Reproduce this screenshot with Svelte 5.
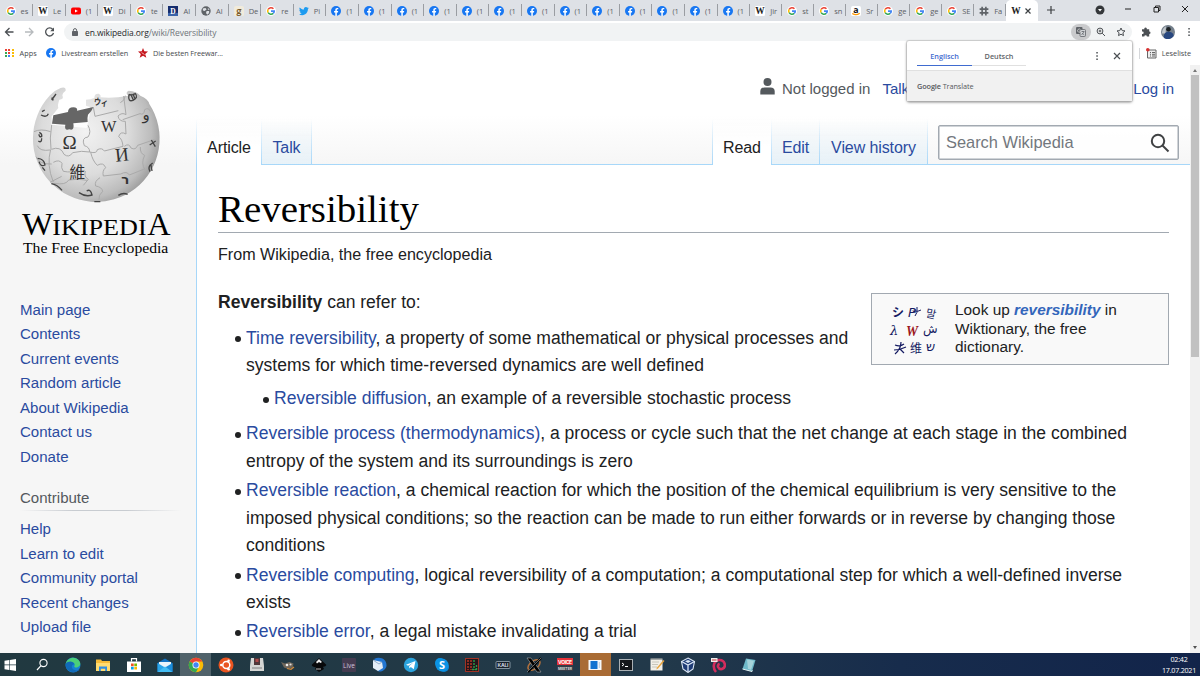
<script>
  const tabs = [
    ['g', 'es'], ['w', 'Le'], ['yt', '(1'], ['w', 'Di'], ['g', 'te'], ['d', 'Al'], ['globe', 'Al'],
    ['good', 'De'], ['g', 're'], ['tw', 'Pi'],
    ...Array.from({ length: 13 }, () => ['fb', '(1']),
    ['w', 'Jir'], ['g', 'st'], ['g', 'sn'], ['az', 'Sr'], ['g', 'ge'], ['g', 'ge'], ['g', 'SE'], ['hash', 'Fa']
  ];
  const nav = ['Main page', 'Contents', 'Current events', 'Random article', 'About Wikipedia', 'Contact us', 'Donate'];
  const contribute = ['Help', 'Learn to edit', 'Community portal', 'Recent changes', 'Upload file'];
  const apps = ['win', 'search', 'edge', 'files', 'store', 'mail', 'chrome', 'ubuntu', 'disk', 'gimp', 'ink', 'live',
    'bird', 'telegram', 'skype', 'grid', 'kali', 'x', 'voice', 'window', 'term', 'note', 'box', 'debian', 'notepad'];
  const dots = ['#ea4335', '#ea4335', '#fbbc05', '#34a853', '#ea4335', '#fbbc05', '#34a853', '#4285f4', '#fbbc05'];
</script>

{#snippet fav(kind)}
  <svg class="fav" viewBox="0 0 16 16">
    {#if kind === 'g'}
      <circle cx="8" cy="8" r="8" fill="#fff" />
      <g fill="none" stroke-width="2.5">
        <path d="M11.9 4.4A5.3 5.3 0 0 0 3.4 5.4" stroke="#ea4335" />
        <path d="M3.4 5.4A5.3 5.3 0 0 0 3.4 10.6" stroke="#fbbc05" />
        <path d="M3.4 10.6A5.3 5.3 0 0 0 11.6 11.8" stroke="#34a853" />
        <path d="M11.6 11.8A5 5 0 0 0 13.2 8.2H8" stroke="#4285f4" />
      </g>
    {:else if kind === 'w'}
      <rect width="16" height="16" rx="2" fill="#fff" />
      <text x="8" y="13" text-anchor="middle" font-family="Liberation Serif, serif" font-size="15" font-weight="bold" fill="#222" textLength="15" lengthAdjust="spacingAndGlyphs">W</text>
    {:else if kind === 'yt'}
      <rect x="0" y="2.5" width="16" height="11" rx="3" fill="#f00" /><path d="M6.4 5.5v5L11 8z" fill="#fff" />
    {:else if kind === 'd'}
      <rect width="16" height="16" fill="#142c6e" /><rect y="11" width="16" height="5" fill="#3b63a8" />
      <text x="8" y="12" text-anchor="middle" font-family="Liberation Serif, serif" font-size="12" font-weight="bold" fill="#fff">D</text>
    {:else if kind === 'globe'}
      <circle cx="8" cy="8" r="7.5" fill="#5f6368" /><path d="M3 4l4-1 2 2-3 3-3-1zM9 8l4 0 0 3-3 3-2-3zM11 3l3 3-3 0z" fill="#dee1e6" />
    {:else if kind === 'good'}
      <rect width="16" height="16" rx="3" fill="#f1ebdc" />
      <text x="8" y="12" text-anchor="middle" font-family="Lato, sans-serif" font-size="16" font-weight="bold" fill="#7b5c2c">g</text>
    {:else if kind === 'tw'}
      <path d="M0 13c2 .2 3.600-.4 4.600-1.300-1.500-.1-2.600-1-3-2.200h1.400C1.400 9 .6 7.700.6 6.200l1.400.4C.6 5.400.3 3.700 1.100 2.200 3 4.300 5.200 5.400 7.900 5.600 7.400 3.300 9 1.600 11 1.600c1 0 1.800.4 2.400 1l2-.8-1.400 1.900 1.900-.5-1.600 1.700C14.300 10 11 14.600 5.200 14.600 3.300 14.600 1.500 14 0 13z" fill="#1d9bf0" />
    {:else if kind === 'fb'}
      <circle cx="8" cy="8" r="8" fill="#1877f2" /><path d="M6.900 16v-5.700H4.900V8h2V6.200c0-2 1.200-3.100 3-3.100l1.700.1v2h-1c-1 0-1.300.6-1.300 1.200V8h2.200l-.4 2.300H9.300V16z" fill="#fff" />
    {:else if kind === 'az'}
      <rect width="16" height="16" rx="3" fill="#fff" />
      <text x="8" y="10.500" text-anchor="middle" font-family="Open Sans, sans-serif" font-size="14" font-weight="bold" fill="#111">a</text>
      <path d="M2 12q6 4 12-.4" stroke="#f90" stroke-width="1.800" fill="none" />
    {:else if kind === 'hash'}
      <path d="M5 1v14M11 1v14M1 5h14M1 11h14" stroke="#5f6368" stroke-width="2.600" />
    {/if}
  </svg>
{/snippet}

{#snippet app(kind)}
  <svg class="app" viewBox="0 0 16 16">
    {#if kind === 'win'}
      <path d="M2.500 3.700l4.800-.7v4.600H2.500zM7.900 2.900L14 2v5.600H7.900zM2.500 8.300h4.800V13l-4.800-.7zM7.900 8.300H14V14l-6.100-.9z" fill="#fff" />
    {:else if kind === 'search'}
      <circle cx="9.500" cy="6" r="3.600" fill="none" stroke="#fff" stroke-width="1.100" /><path d="M7 8.700L3 13" stroke="#fff" stroke-width="1.200" />
    {:else if kind === 'edge'}
      <circle cx="8" cy="8" r="7.500" fill="#1682d2" /><path d="M.6 7C2 1 9-1.500 13.500 3c2.500 2.600 2.600 6-1 7.300-2.200.6-4-.4-3-1.800C11 5.500 5 3.200.6 7z" fill="#4bcf7a" /><path d="M.6 7C3 3.500 8.500 4 9.200 7.200 6 7.500 5.500 12 10.500 13.300c2 .5 3-.6 4.200-1C12 16.500 2.500 16.500.6 9z" fill="#116ab8" />
    {:else if kind === 'files'}
      <path d="M1 2.500h5l1 1.500h8v10H1z" fill="#f5ba38" /><path d="M1 6h14v8H1z" fill="#ffdb70" /><path d="M4 9.500h8V14h-1.800v-2.200H5.800V14H4z" fill="#2f8de0" />
    {:else if kind === 'store'}
      <path d="M1 4.500h14V15H1z" fill="#fff" /><path d="M5.500 4.500V1.600h5v2.900" fill="none" stroke="#fff" stroke-width="1.200" /><path d="M5 6.500h2.700v2.700H5z" fill="#f25022" /><path d="M8.300 6.500H11v2.700H8.300z" fill="#7fba00" /><path d="M5 9.800h2.700v2.700H5z" fill="#00a4ef" /><path d="M8.300 9.800H11v2.700H8.300z" fill="#ffb900" />
    {:else if kind === 'mail'}
      <path d="M.500 6L8 1.500 15.500 6v9H.500z" fill="#1273c4" /><path d="M2 5h12v6H2z" fill="#e9f4fb" /><path d="M.500 6L8 10.500.500 15z" fill="#2aa4e8" /><path d="M15.500 6L8 10.500 15.500 15z" fill="#1b8ddb" /><path d="M.500 15L8 9.500l7.500 5.500z" fill="#42bdf4" />
    {:else if kind === 'chrome'}
      <circle cx="8" cy="8" r="7.300" fill="#fbbc05" /><path d="M8 8L1.700 4.400A7.300 7.300 0 0 1 14.300 4.400H8z" fill="#ea4335" /><path d="M1.700 4.400A7.300 7.300 0 0 0 8 15.300L11 9.600 8 8z" fill="#34a853" /><circle cx="8" cy="8" r="3.500" fill="#fff" /><circle cx="8" cy="8" r="2.700" fill="#4285f4" />
    {:else if kind === 'ubuntu'}
      <circle cx="8" cy="8" r="7.500" fill="#e95420" /><circle cx="8.300" cy="8" r="3.500" fill="none" stroke="#fff" stroke-width="1.500" /><circle cx="3.300" cy="8" r="1.300" fill="#fff" /><circle cx="10.600" cy="3.700" r="1.300" fill="#fff" /><circle cx="10.600" cy="12.300" r="1.300" fill="#fff" />
    {:else if kind === 'disk'}
      <path d="M2 1h12l1 8v5H1V9z" fill="#d5d6d4" /><path d="M5 1h6v7H5z" fill="#50383b" /><path d="M6.500 2h3v3h-3z" fill="#b14a4a" /><path d="M3 10h10v2H3z" fill="#aaa" />
    {:else if kind === 'gimp'}
      <path d="M1 5l4 1.500L9.500 5l4 1.500-.8 4-4.700 1.500-4-1.500z" fill="#6f665a" /><circle cx="7" cy="8" r="1.300" fill="#eee" /><circle cx="10.500" cy="7.500" r="1.100" fill="#ddd" /><path d="M7 11.500l4 .8 3-2.300" stroke="#d18a3c" stroke-width="1.200" fill="none" />
    {:else if kind === 'ink'}
      <path d="M8 1l7 6.500c1 1.500-2 2-3 2.500l1 2-5 3-4-3 1-1.500C3 10 0 9 1 7.500z" fill="#08090b" /><path d="M8 2l3 3-1.500 1L8 5 6 6.500 5 5z" fill="#eee" /><path d="M5 12h5" stroke="#bbb" />
    {:else if kind === 'live'}
      <rect x="1" y="1" width="14" height="14" rx="1" fill="#443b50" /><text x="8" y="10.500" text-anchor="middle" font-family="Open Sans, sans-serif" font-size="6.500" fill="#cfc6dd">Live</text>
    {:else if kind === 'bird'}
      <path d="M2 2c6-3 13 0 12.500 7-1 5-7 7-10 4.500 3 0 4-2 3-4z" fill="#2376d1" /><path d="M1 3l9 2 1 6-5 3-5-3z" fill="#e4edf6" /><path d="M1 3l6 4 3-2" fill="none" stroke="#93aecb" />
    {:else if kind === 'telegram'}
      <circle cx="8" cy="8" r="7.200" fill="#2ba3dd" /><path d="M3 7.800l9.500-3.900-1.700 8.300-3-2.100-1.400 1.500-.3-2.500 4.300-3.600-5.300 3.200z" fill="#fff" />
    {:else if kind === 'skype'}
      <circle cx="6" cy="6" r="5" fill="#0a96e6" /><circle cx="10" cy="10" r="5" fill="#0a86d6" /><circle cx="8" cy="8" r="6.500" fill="#0c93e4" /><text x="8" y="12" text-anchor="middle" font-family="Open Sans, sans-serif" font-size="11" font-weight="bold" fill="#fff">S</text>
    {:else if kind === 'grid'}
      <rect x="1.500" y="1.500" width="13" height="13" fill="#25151a" stroke="#a03224" /><path d="M4 3v10M7 3v10" stroke="#b33424" stroke-dasharray="2 1" stroke-width="1.500" /><path d="M10 3v10M12.500 8v5M8 12.500h5" stroke="#289d4c" stroke-dasharray="2 1" stroke-width="1.400" />
    {:else if kind === 'kali'}
      <rect x="1" y="4.500" width="14" height="7" rx="1" fill="#17202b" stroke="#9dacb9" stroke-width=".8" /><text x="8" y="10" text-anchor="middle" font-family="Inter, sans-serif" font-size="5" font-weight="bold" fill="#d0dae2" textLength="11">KALI</text>
    {:else if kind === 'x'}
      <ellipse cx="8" cy="8" rx="7" ry="4" transform="rotate(-38 8 8)" fill="none" stroke="#b2713d" stroke-width="1.500" /><path d="M1 1h4l10 14h-4z" fill="#000" stroke="#c4c4c4" stroke-width=".5" /><path d="M15 1L2 15" stroke="#000" stroke-width="2" /><path d="M15 1L1 15" stroke="#aaa" stroke-width=".6" />
    {:else if kind === 'voice'}
      <rect x="0" y="1" width="16" height="7" fill="#e8333a" /><rect x="0" y="8" width="16" height="6" fill="#343b46" /><text x="8" y="6.500" text-anchor="middle" font-family="Inter, sans-serif" font-size="5" font-weight="bold" fill="#fff" textLength="14">VOICE</text><text x="8" y="12.800" text-anchor="middle" font-family="Inter, sans-serif" font-size="4" font-weight="bold" fill="#ddd" textLength="14" lengthAdjust="spacingAndGlyphs">MEETER</text>
    {:else if kind === 'window'}
      <rect x="1.500" y="3" width="13" height="10" fill="#f5f8fa" /><rect x="3.500" y="4" width="7" height="8" fill="#1273d0" /><path d="M12.300 5v6" stroke="#bcd" />
    {:else if kind === 'term'}
      <rect x="1.500" y="2.500" width="13" height="11" fill="#14171b" stroke="#aab0b4" /><path d="M4 6l2 1.500L4 9M7 9.500h3" stroke="#fff" fill="none" />
    {:else if kind === 'note'}
      <path d="M1.500 2.500h12v11h-12z" fill="#f2efe7" /><path d="M3 5h7M3 7.500h6M3 10h5" stroke="#c8c6bb" /><path d="M14.500 3L8 10.500l-.7 2L9 11.500 15.500 4z" fill="#e9a33a" /><path d="M1.500 2h12" stroke="#c0bfb7" />
    {:else if kind === 'box'}
      <path d="M8 1l6.500 3.500L13 12l-5 3.500L3 12 1.500 4.500z" fill="#1f3c76" stroke="#dbe6f4" stroke-width="1.100" /><path d="M1.500 4.500L8 8l6.500-3.500M8 8v7" stroke="#dbe6f4" stroke-width="1.300" fill="none" /><path d="M5 4.300L8 3l3 1.300L8 6z" fill="#dbe6f4" />
    {:else if kind === 'debian'}
      <path d="M6 15C2.500 11 3 4 9 3c6-.4 8 7 3 9-4 .8-5.500-4-2.400-5.200" fill="none" stroke="#d32d5d" stroke-width="2.600" /><rect x="1" y="1" width="6.500" height="4" fill="#eee" /><path d="M2 3h4.500" stroke="#c33" />
    {:else if kind === 'notepad'}
      <path d="M5 1.500L14.500 3 11 14.500 1.500 12z" fill="#6fb9c9" /><path d="M6 2.500l7 1.200-3 9L7 12z" fill="#a5d3da" /><path d="M1.500 12l9.500 2.500.4-1.200" stroke="#e7f4f5" fill="none" />
    {/if}
  </svg>
{/snippet}

<div class="screen">
  <div class="tabstrip">
    {#each tabs as [kind, label], i}
      <div class="tab" class:late={i > 22}>{@render fav(kind)}<span>{label}</span></div>
    {/each}
    <div class="tab active">
      {@render fav('w')}
      <svg class="x" viewBox="0 0 8 8"><path d="M1.500 1.500l5 5M6.500 1.500l-5 5" /></svg>
    </div>
    <svg class="plus" viewBox="0 0 10 10"><path d="M5 1v8M1 5h8" /></svg>
    <div class="wincontrols">
      <svg width="10" height="10" viewBox="0 0 10 10"><circle cx="5" cy="5" r="4.500" fill="#34373a" /><path d="M3 4l2 2.400L7 4z" fill="#fff" /></svg>
      <svg width="8" height="8" viewBox="0 0 8 8"><path d="M1 4h6" /></svg>
      <svg width="8" height="8" viewBox="0 0 8 8"><path d="M1 2.500h4.500V7H1zM2.500 2.500V1H7v4.500H5.500" /></svg>
      <svg width="8" height="8" viewBox="0 0 8 8"><path d="M1 1l6 6M7 1L1 7" /></svg>
    </div>
  </div>

  <div class="toolbar">
    <svg width="20" height="12" viewBox="0 0 20 12"><path d="M13.500 6H6M9.500 2L5.500 6l4 4" stroke="#4c5054" stroke-width="1.300" fill="none" /></svg>
    <svg width="20" height="12" viewBox="0 0 20 12"><path d="M5 6h7.500M9 2l4 4-4 4" stroke="#b7babd" stroke-width="1.300" fill="none" /></svg>
    <svg width="20" height="12" viewBox="0 0 20 12"><path d="M12.800 3.500A4 4 0 1 0 13.500 7" stroke="#4c5054" stroke-width="1.300" fill="none" /><path d="M14 1.500v3.800h-3.800z" fill="#4c5054" /></svg>
    <div class="omnibox">
      <svg width="6" height="8" viewBox="0 0 6 8"><rect y="3" width="6" height="5" rx=".7" fill="#5f6368" /><path d="M1.400 3.500V2.200a1.600 1.600 0 0 1 3.200 0v1.300" fill="none" stroke="#5f6368" /></svg>
      <div class="url"><b>en.wikipedia.org</b>/wiki/Reversibility</div>
      <div class="translate"><svg width="10" height="10" viewBox="0 0 10 10"><rect width="6.500" height="7" rx="1" fill="#5f6368" /><rect x="4" y="2.500" width="5.500" height="7" rx="1" fill="#d0d3d6" stroke="#5f6368" stroke-width=".8" /><path d="M5.500 4.500h3M7 4v1M8 5L5.500 8M6 6l2.300 2" stroke="#5f6368" stroke-width=".7" /><path d="M4.500 2.800a1.600 1.600 0 1 0 .2 1.200H3.300" fill="none" stroke="#ddd" stroke-width=".7" /></svg></div>
      <svg class="mag" width="10" height="10" viewBox="0 0 10 10"><circle cx="4" cy="4" r="2.900" /><path d="M6.200 6.200L9 9M2.700 4h2.600M4 2.700v2.600" /></svg>
      <svg class="star" width="10" height="10" viewBox="0 0 10 10"><path d="M5 1l1.200 2.600 2.800.3-2.100 1.900.6 2.800L5 7.200 2.500 8.600l.6-2.800L1 3.900l2.800-.3z" /></svg>
    </div>
    <svg class="puzzle" width="10" height="10" viewBox="0 0 10 10"><path d="M1 2.200h2.300a1.300 1.300 0 1 1 2.500 0h2.400v2.300a1.300 1.300 0 1 1 0 2.600v2.400H5.900a1.300 1.300 0 1 0-2.600 0H1V7a1.300 1.300 0 1 0 0-2.500z" fill="#4c5054" /></svg>
    <svg class="avatar" width="14" height="14" viewBox="0 0 14 14"><circle cx="7" cy="7" r="7" fill="#75808c" /><path d="M1 8.500c0-4 2-6.500 4-7l-.5 7z" fill="#c0c6cb" /><path d="M3 13C2 9 4.500 7 7.500 6.500 10 7 13 8 12.500 11.300A7 7 0 0 1 3 13z" fill="#28477f" /><circle cx="7.500" cy="4.300" r="2.300" fill="#1b2023" /></svg>
    <svg class="menu" width="4" height="10" viewBox="0 0 4 10"><path d="M1.300 1h1.500v1.500H1.300zM1.300 4.300h1.500v1.500H1.300zM1.300 7.600h1.500v1.500H1.300z" fill="#4c5054" /></svg>
  </div>

  <div class="bookmarks">
    <div class="dots">{#each dots as c}<i style:background={c}></i>{/each}</div>
    <span class="apps">Apps</span>
    {@render fav('fb')}<span class="live">Livestream erstellen</span>
    <svg class="red" width="10" height="10" viewBox="0 0 10 10"><path d="M5 0l1.300 3.300L10 3.600 7.200 6 8.300 9.800 5 7.700 1.700 9.800 2.800 6 0 3.600l3.700-.3z" fill="#c5161d" /><path d="M3.500 4.500l3 2" stroke="#eaa" /></svg>
    <span class="free">Die besten Freewar...</span>
    <div class="reading"><svg width="11" height="11" viewBox="0 0 11 11"><path d="M1.500 2h8.500v8H1.500z" fill="#eee" stroke="#666" /><path d="M4 4.500h1M6 4.500h3M4 6.300h1M6 6.300h3M4 8h1M6 8h3" stroke="#666" /><circle cx="1.800" cy="1.800" r="1.800" fill="#d83030" /></svg><span>Leseliste</span></div>
  </div>

  <div class="page">
    <aside>
      <svg class="logo" viewBox="0 0 600 600">
        <defs>
          <radialGradient id="ball" gradientUnits="userSpaceOnUse" cx="255" cy="200" r="235"><stop offset="0" stop-color="#f2f2f2" /><stop offset=".55" stop-color="#dcdcdc" /><stop offset=".85" stop-color="#bcbcbc" /><stop offset="1" stop-color="#999" /></radialGradient>
        </defs>
        <path d="M150 91Q165 75 182 69q16-5 15 8-9 6-10 14 6 13-9 13-6 16-3 25l-20 25v25l105 10 12-55-2-8-12-4v-18q14 0 25-5 0-14 13-13 8 4 5 11 40 4 84-5-11-9 1-15 24 1 35 15 24 10 27 25A190 190 0 1 1 150 91z" fill="url(#ball)" />
        <path d="M160 151l44-10q0-14 16-14 14 1 11 10l49-11q-5 14-16 23-3 11-1 22l-43 4q4 24-12 18-16 5-12-14l-40-3z" fill="#666" />
        <g fill="none" stroke="#aaa" stroke-width="3">
          <path d="M155 180q-7 42-2 72M152 200q-30-10-50 0M154 253q28-11 38 15 15 12 26-5 27-7 51-2 0-15-16-19-10-24 11-26 11-15 0-35M152 253q-13 47 8 98M160 292q18-10 26 3-4 14 4 24 22 5 64-3M112 242q8 18 38 13M108 275q10 24 47 22M269 261q22 6 23-7 14-7 21 4l56-14q-2-22-13-29 5-18 22-8l-2-38q-19 1-22-16 12-12 24-4l-7-56M373 244q14-11 20 5 14 8 20-8l50-17M368 164l52-18q12 6 14-12 12-8 17 5M272 262q6 26 20 39 18-11 25 7-11 9-7 25l52-6q19-10 26 3l45-18M300 338q-18 11-13 25 19 3 21 16-13 11-11 25M256 318q-5 18 9 25l-15 18M421 246q-1 20 13 25-12 23 1 44M376 92q-2 16-15 21M280 126l5 28 70-17M185 334l-35 18M163 355q35 6 43-10 27-5 56 1" />
        </g>
        <g fill="#333" text-anchor="middle" font-family="Liberation Serif, DejaVu Sans, serif">
          <text x="326" y="202" font-size="49">W</text>
          <text x="209" y="252" font-size="57">Ω</text>
          <text x="366" y="288" font-size="57" transform="rotate(-6 366 270)">И</text>
          <text x="232" y="338" font-size="47" font-family="Noto Sans CJK TC, sans-serif">維</text>
          <text x="303" y="122" font-size="28" font-weight="bold" font-family="Noto Sans CJK JP, sans-serif" transform="rotate(8 303 111)" textLength="42" lengthAdjust="spacingAndGlyphs">ウィ</text>
          <text x="376" y="358" font-size="40" font-weight="bold" font-family="DejaVu Sans, sans-serif">ר</text>
          <text x="438" y="166" font-size="45" font-family="DejaVu Sans, sans-serif">و</text>
        </g>
        <g fill="none" stroke="#444" stroke-width="4">
          <path d="M155 105l13-18M160 106l-5-8M123 150q17 9 22-4M126 140l8-5M118 202q9 4 7 13-8 2-8-7M115 228q10 7 10-8M113 280q20 2 22 20-13 7-18-10M127 307l8 10M154 356q18 3 32 20M237 383q20 14 39 7-4-20-16-12M355 391q14-9 28-3M283 410h18M449 240l18-12M454 225l12 20M450 320q-9-15 8-26M453 300l3 18M387 88q-4 24 12 18 17-8 7-20-12 7-19 2M392 87l8 18M399 86l5 14" />
        </g>
        <g fill="#000" font-family="Liberation Serif, serif">
          <text x="66" y="509" font-size="97" textLength="93" lengthAdjust="spacingAndGlyphs">W</text>
          <text x="157" y="509" font-size="70" textLength="283" lengthAdjust="spacingAndGlyphs">IKIPEDI</text>
          <text x="442" y="509" font-size="97" textLength="70" lengthAdjust="spacingAndGlyphs">A</text>
          <text x="69" y="563" font-size="45" textLength="436" lengthAdjust="spacingAndGlyphs">The Free Encyclopedia</text>
        </g>
      </svg>
      <nav>
        {#each nav as n}<a>{n}</a>{/each}
      </nav>
      <h3>Contribute</h3>
      <nav>
        {#each contribute as n}<a>{n}</a>{/each}
      </nav>
    </aside>

    <main>
      <div class="personal">
        <svg width="15" height="17" viewBox="0 0 15 17"><circle cx="7.500" cy="4" r="4" fill="#54595d" /><path d="M.300 16.500v-3q0-4 4.200-4h6q4.200 0 4.200 4v3z" fill="#54595d" /></svg>
        <span class="anon">Not logged in</span><a class="ptalk">Talk</a><a class="login">Log in</a>
      </div>
      <div class="ptabs">
        <span class="pt on" style:width="66px">Article</span>
        <a class="pt edge" style:width="50px">Talk</a>
        <div class="fill"></div>
        <span class="pt on" style:width="59px">Read</span>
        <a class="pt edge" style:width="48px">Edit</a>
        <a class="pt edge" style:width="108px">View history</a>
        <div class="searchwrap">
          <div class="search"><span>Search Wikipedia</span><svg width="20" height="20" viewBox="0 0 20 20"><circle cx="8" cy="8" r="6.200" /><path d="M12.500 12.500l6 6" /></svg></div>
        </div>
      </div>
      <article>
        <h1><span>Reversibility</span></h1>
        <p class="sub">From Wikipedia, the free encyclopedia</p>
        <div class="intro">
          <p><b>Reversibility</b> can refer to:</p>
          <div class="wikt">
            <svg width="54" height="54" viewBox="0 0 54 54" fill="#151b62" font-size="14" font-family="Noto Sans CJK JP, sans-serif">
              <text x="4" y="15" font-weight="bold" font-size="12">シ</text><text x="20" y="15" font-family="DejaVu Sans, sans-serif" font-style="italic" font-size="13">Ҏ</text><path d="M26 9q4 1 7-1M29 5q1 6-2 9" stroke="#151b62" fill="none" /><text x="38" y="16" font-size="11" font-family="Noto Sans CJK KR, sans-serif" transform="rotate(12 44 12)">말</text>
              <text x="2" y="33" font-family="DejaVu Serif, serif" font-size="13" font-style="italic">λ</text><text x="18" y="34" font-style="italic" font-weight="bold" font-family="Liberation Serif, serif" fill="#9b1620" textLength="12" lengthAdjust="spacingAndGlyphs">W</text><text x="35" y="31" font-family="DejaVu Sans, sans-serif" font-size="12">ش</text>
              <path d="M7 43q5 2 9-1M6 48q6 0 12-3M13 40q0 7-6 12M11 46l5 5" stroke="#151b62" stroke-width="1.200" fill="none" /><text x="22" y="51" font-size="12">维</text><text x="38" y="49" font-family="DejaVu Sans, sans-serif" font-size="13">ש</text>
            </svg>
            <div>Look up <a><b><i>reversibility</i></b></a> in<br />Wiktionary, the free<br />dictionary.</div>
          </div>
        </div>
        <ul>
          <li><a>Time reversibility</a>, a property of some mathematical or physical processes and<br />systems for which time-reversed dynamics are well defined
            <ul><li><a>Reversible diffusion</a>, an example of a reversible stochastic process</li></ul>
          </li>
          <li><a>Reversible process (thermodynamics)</a>, a process or cycle such that the net change at each stage in the combined<br />entropy of the system and its surroundings is zero</li>
          <li><a>Reversible reaction</a>, a chemical reaction for which the position of the chemical equilibrium is very sensitive to the<br />imposed physical conditions; so the reaction can be made to run either forwards or in reverse by changing those<br />conditions</li>
          <li><a>Reversible computing</a>, logical reversibility of a computation; a computational step for which a well-defined inverse<br />exists</li>
          <li><a>Reversible error</a>, a legal mistake invalidating a trial</li>
        </ul>
      </article>
    </main>

    <div class="scroll"><i class="up"></i><div class="thumb"></div><i class="down"></i></div>
  </div>

  <div class="taskbar">
    {#each apps as k}
      <div class="cell" class:lit={k === 'chrome'} class:orange={k === 'window'}>{@render app(k)}</div>
    {/each}
    <div class="clock">02:42<br />17.07.2021</div>
  </div>

  <div class="popup">
    <div class="langs">
      <span class="lang sel">Englisch</span><span class="lang">Deutsch</span>
      <svg class="pmenu" width="4" height="10" viewBox="0 0 4 10"><path d="M1.300 1h1.500v1.500H1.300zM1.300 4.300h1.500v1.500H1.300zM1.300 7.600h1.500v1.500H1.300z" fill="#4c5054" /></svg>
      <svg class="px" width="8" height="8" viewBox="0 0 8 8"><path d="M1 1l6 6M7 1L1 7" stroke="#4c5054" stroke-width="1.200" /></svg>
    </div>
    <div class="gt"><b>Google</b> Translate</div>
  </div>
</div>

<style>
  :global(body) { margin: 0; overflow: hidden; }
  .screen { position: relative; width: 1200px; height: 676px; display: flex; flex-direction: column; overflow: hidden; background: #fff; font-family: "Liberation Sans", Arial, sans-serif; }
  svg { display: block; flex: none; }
  .fav { width: 10px; height: 10px; }
  .tabstrip { height: 21px; flex: none; display: flex; background: #dee1e6; font: 7.500px "Open Sans", sans-serif; color: #5c6065; padding-left: .5px; }
  .tab { width: 32.6px; flex: none; box-sizing: border-box; display: flex; align-items: center; padding-left: 5px; gap: 5px; background: linear-gradient(#9a9da2, #9a9da2) right 4px / 1px 12px no-repeat; }
  .tab.late { width: 32px; }
  .tab span { white-space: nowrap; }
  .tab.active { background: #fff; border-radius: 5px 5px 0 0; width: 32px; }
  .tab.active .x { width: 8px; height: 8px; margin-left: -2px; }
  .x path, .plus path { stroke: #3c4043; stroke-width: 1.200; }
  .plus { width: 10px; height: 10px; margin: 5px 0 0 8px; }
  .wincontrols { flex: 1; display: flex; justify-content: flex-end; align-items: center; gap: 20.500px; padding-right: 11px; height: 17px; }
  .wincontrols svg:first-child { margin: 3px -1px 0 0; }
  .wincontrols svg:not(:first-child) path { stroke: #222; fill: none; }
  .toolbar { height: 22px; flex: none; display: flex; align-items: center; }
  .omnibox { display: flex; align-items: center; box-sizing: border-box; margin-left: 4px; width: 1068px; height: 18px; border-radius: 9px; background: #f1f3f4; padding-left: 8px; color: #70757a; font: 8.500px "Open Sans", sans-serif; }
  .url { flex: 1; margin-left: 7px; letter-spacing: -.08px; }
  .url b { font-weight: 400; color: #26282b; }
  .translate { width: 20px; height: 16px; border-radius: 8px; background: #c9cacc; display: grid; place-items: center; margin-right: 5px; }
  .mag, .star { stroke: #4c5054; fill: none; }
  .star { margin: 0 6px 0 10px; }
  .puzzle { margin-left: 9px; }
  .avatar { margin-left: 10px; }
  .menu { margin-left: 12px; }
  .bookmarks { height: 20px; flex: none; display: flex; align-items: center; border-bottom: 1px solid #e4e5e7; font: 7.300px "Open Sans", sans-serif; color: #46494d; padding: 0 0 2px 5px; box-sizing: content-box; height: 20px; margin-bottom: -2px; }
  .dots { display: grid; grid-template-columns: repeat(3, 2px); gap: 1.300px; }
  .dots i { height: 2px; }
  .apps { margin: 0 9.500px 0 6px; }
  .bookmarks .live { margin: 0 10px 0 5px; letter-spacing: -.09px; }
  .free { margin-left: 5px; letter-spacing: -.09px; }
  .reading { margin-left: auto; display: flex; gap: 5px; align-items: center; padding: 0 9px 0 6px; border-left: 1px solid #d5d7da; }
  .page { position: relative; height: 588px; flex: none; display: grid; grid-template-columns: 196px 1fr 10px; background: linear-gradient(#fff 50px, #f6f6f6 100px); margin-top: 1px; }
  aside { overflow: hidden; }
  .logo { width: 200px; height: 200px; margin-bottom: 32.500px; }
  a { color: #2a4b9f; }
  aside a { display: block; height: 24.500px; line-height: 24.500px; font-size: 15.050px; padding-left: 20px; white-space: nowrap; }
  h3 { margin: 17px 15px 6px 20px; height: 24px; line-height: 24px; font-size: 15.050px; font-weight: 400; color: #54595d; padding-bottom: 1px; background: linear-gradient(90deg, #c8ccd100, #c8ccd1 33%, #c8ccd1 66%, #c8ccd100) bottom / 100% 1px no-repeat; }
  main { min-width: 0; }
  .personal { height: 54px; display: flex; box-sizing: border-box; padding: 12px 0 0 564px; font-size: 15px; line-height: 23px; color: #54595d; white-space: nowrap; }
  .personal svg { margin-top: 1px; }
  .anon { margin: 0 12px 0 7px; }
  .login { margin: 0 16px 0 auto; }
  .ptabs { height: 46px; display: flex; font-size: 16px; letter-spacing: -.1px; color: #202122; }
  .pt, .fill, .searchwrap { box-sizing: border-box; border-bottom: 1px solid #a7d7f9; }
  .pt { flex: none; line-height: 57px; text-align: center; white-space: nowrap; }
  .pt.edge { background: linear-gradient(#fff0, #e8f2f8); }
  .pt.on { background: linear-gradient(#fff0, #fff 60%); }
  .ptabs > :not(:last-child) { border-right: 1px solid; border-image: linear-gradient(#a7d7f900, #a7d7f9) 0 1 1 0; }
  .ptabs > .on { border-bottom: 0; border-image: linear-gradient(#a7d7f900, #a7d7f9) 0 1 0 0; }
  .ptabs > .on:first-child { border-left: 1px solid; border-image: linear-gradient(#a7d7f900, #a7d7f9) 0 1 0 1; }
  .fill { flex: 1; }
  .searchwrap { flex: none; width: 262px; padding: 6px 0 0 10px; }
  .search { box-sizing: border-box; width: 241px; height: 35px; border: 1px solid #a2a9b1; border-radius: 2px; background: #fffc; display: flex; align-items: center; justify-content: space-between; padding: 0 8px 0 7px; color: #72777d; font-size: 16.400px; letter-spacing: 0; box-shadow: inset 0 0 0 .5px #a2a9b1; }
  .search svg { stroke: #404244; stroke-width: 2; fill: none; }
  article { height: 488px; overflow: hidden; box-sizing: border-box; background: #fff; border-left: 1px solid #a7d7f9; padding: 24px 21px 0; color: #202122; font-size: 17.540px; line-height: 27.600px; }
  h1 { margin: 0; height: 43px; border-bottom: 1px solid #a2a9b1; font: 400 38.900px/40px "Liberation Serif", serif; color: #000; }
  p { margin: 0; }
  .sub { font-size: 16.120px; margin-top: 8px; }
  .intro { display: flex; justify-content: space-between; height: 44px; padding-top: 20px; box-sizing: border-box; }
  .wikt { box-sizing: border-box; width: 298px; height: 72px; margin-top: 4.500px; flex: none; border: 1px solid #a2a9b1; background: #f9f9f9; display: flex; font-size: 15.400px; line-height: 18.900px; padding: 6.500px 0 0 16px; gap: 13px; }
  .wikt svg { margin-top: 1px; }
  .wikt a { color: #36b; }
  ul { margin: 0; padding: 0 0 0 28px; list-style: none; white-space: nowrap; }
  article > ul { margin-top: 12.300px; }
  li { margin-bottom: 1.700px; position: relative; }
  li::before { content: ""; position: absolute; left: -11px; top: 11.500px; width: 6px; height: 6px; border-radius: 50%; background: #202122; }
  ul ul { margin: 5.400px 0 7.200px; }
  ul ul li { margin-bottom: 0; }
  .scroll { background: #f1f1f1; display: flex; flex-direction: column; align-items: center; }
  .thumb { width: 8px; height: 282px; background: #c1c1c1; margin-top: 3px; }
  .up, .down { border: 2.500px solid transparent; }
  .up { border-bottom: 3px solid #777; border-top: 0; margin-top: 4px; }
  .down { border-top: 3px solid #505050; border-bottom: 0; margin: auto 0 4px; }
  .taskbar { height: 24px; flex: none; display: flex; background: linear-gradient(90deg, #213940, #22394a 55%, #172c4c 75%, #12244a); }
  .cell { width: 30.750px; flex: none; display: grid; place-items: center; }
  .cell:first-child { width: 26.500px; justify-content: start; }
  .cell:first-child .app { margin-left: 2px; }
  .app { width: 16px; height: 16px; }
  .lit { background: #50626a; }
  .orange { background: #a96b34; }
  .clock { margin-left: auto; width: 42px; text-align: center; color: #fff; font: 7.200px/11px "Open Sans", sans-serif; padding-top: 1px; letter-spacing: -.25px; }
  .popup { position: absolute; left: 907px; top: 41px; width: 225px; height: 60px; background: #fff; border-radius: 2px; box-shadow: 0 0 0 1px #bbb8, 0 1px 3px #0009; font-family: "Open Sans", sans-serif; }
  .langs { display: flex; align-items: center; height: 30px; padding-left: 10px; box-sizing: border-box; border-bottom: 1px solid #e0e0e0; font-size: 7.300px; font-weight: 600; color: #5f6368; }
  .lang { box-sizing: border-box; width: 54px; height: 20px; line-height: 20px; text-align: center; border-bottom: 1px solid #e0e0e0; }
  .lang.sel { width: 55px; color: #3f6bd0; border-bottom: 1px solid #3f6bd0; }
  .pmenu { margin-left: 69px; }
  .px { margin-left: 14px; }
  .gt { height: 30px; background: #f1f1f1; padding-left: 10px; line-height: 30px; font-size: 7.300px; color: #55585c; letter-spacing: -.1px; }
  .gt b { font-weight: 600; }
</style>
